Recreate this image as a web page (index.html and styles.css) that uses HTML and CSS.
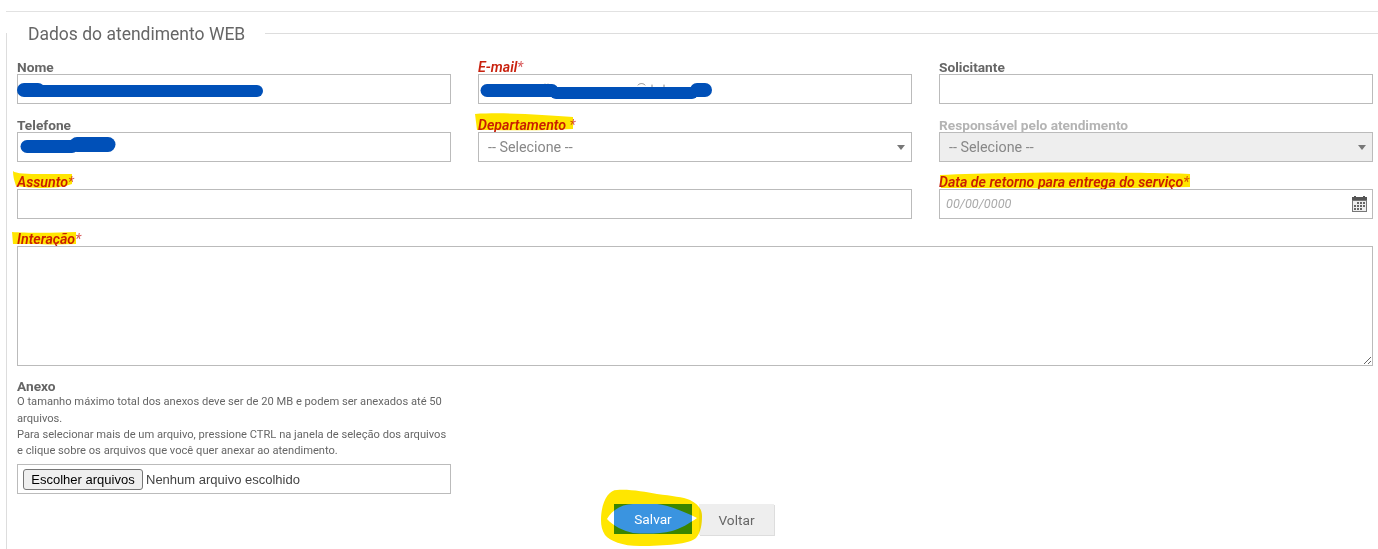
FILE: index.html
```html
<!DOCTYPE html>
<html lang="pt-BR">
<head>
<meta charset="utf-8">
<title>Dados do atendimento WEB</title>
<link rel="stylesheet" href="styles.css">
</head>
<body>
<div class="page">
  <hr class="rule">
  <form class="panel">
    <div class="legend">
      <h2 class="legend-title">Dados do atendimento WEB</h2>
      <span class="legend-line"></span>
    </div>
    <div class="grid">
      <div class="field">
        <label class="label">Nome</label>
        <input class="control" type="text">
      </div>
      <div class="field">
        <label class="label required">E-mail<span class="star">*</span></label>
        <input class="control" type="text">
      </div>
      <div class="field">
        <label class="label">Solicitante</label>
        <input class="control" type="text">
      </div>
      <div class="field">
        <label class="label">Telefone</label>
        <input class="control" type="text">
      </div>
      <div class="field">
        <label class="label required">Departamento <span class="star">*</span></label>
        <div class="select-wrap">
          <select class="control select"><option>-- Selecione --</option></select>
          <svg class="select-arrow" width="8" height="5" viewBox="0 0 8 5"><path d="M0 0h8L4 5z"/></svg>
        </div>
      </div>
      <div class="field">
        <label class="label disabled">Responsável pelo atendimento</label>
        <div class="select-wrap">
          <select class="control select is-disabled" disabled><option>-- Selecione --</option></select>
          <svg class="select-arrow" width="8" height="5" viewBox="0 0 8 5"><path d="M0 0h8L4 5z"/></svg>
        </div>
      </div>
      <div class="field span-2">
        <label class="label required">Assunto<span class="star">*</span></label>
        <input class="control" type="text">
      </div>
      <div class="field">
        <label class="label required">Data de retorno para entrega do serviço<span class="star">*</span></label>
        <div class="select-wrap">
          <input class="control date" type="text" placeholder="00/00/0000">
          <svg class="calendar" width="15" height="16" viewBox="0 0 15 16">
            <path fill="#555" d="M0 1h2V0h2v1h7V0h2v1h2v4H0z"/>
            <rect x="0" y="4" width="15" height="12" fill="#777"/>
            <rect x="1" y="5" width="13" height="10" fill="#eee"/>
            <path fill="#666" d="M5 6h2v2H5zM8 6h2v2H8zM11 6h2v2h-2zM2 9h2v2H2zM5 9h2v2H5zM8 9h2v2H8zM11 9h2v2h-2zM2 12h2v2H2zM5 12h2v2H5zM8 12h2v2H8z"/>
          </svg>
        </div>
      </div>
      <div class="field span-3">
        <label class="label required">Interação<span class="star">*</span></label>
        <textarea class="control textarea"></textarea>
      </div>
    </div>
    <div class="attach">
      <label class="label">Anexo</label>
      <p class="help">O tamanho máximo total dos anexos deve ser de 20 MB e podem ser anexados até 50 arquivos.</p>
      <p class="help">Para selecionar mais de um arquivo, pressione CTRL na janela de seleção dos arquivos e clique sobre os arquivos que você quer anexar ao atendimento.</p>
      <div class="file">
        <button class="file-btn" type="button">Escolher arquivos</button>
        <span class="file-name">Nenhum arquivo escolhido</span>
      </div>
    </div>
    <div class="actions">
      <button class="btn btn-primary" type="button">Salvar</button>
      <button class="btn btn-secondary" type="button">Voltar</button>
    </div>
  </form>

  <svg class="marks" width="1378" height="549" viewBox="0 0 1378 549">
    <g class="marker">
      <path d="M475 114C505 112 545 115 573 117L573 129C540 131 505 130 477 130Z"/>
      <path d="M940 175C1000 172 1130 172 1190 174L1190 187C1120 189 1000 188 941 188Z"/>
      <path d="M13 171C17 175 40 174 72 174L72 184C55 190 30 188 16 186C14 180 13 176 13 171Z"/>
      <path d="M12 232C25 233 55 233 76 232L76 244C55 245 30 244 13 244Z"/>
      <path fill-rule="evenodd" d="M601 520C601 503 608 490 617 490C630 489 645 492 657 494C672 496 683 497 690 500C698 504 702 509 702 516C702 524 701 532 696 538C690 544 665 546 640 546C622 546 610 541 605 535C602 530 601 526 601 520ZM607 519C612 510 622 504 633 504L657 504C668 505 685 512 697 518C690 523 680 529 672 531C660 534 645 534 633 533C624 531 613 526 607 519Z"/>
    </g>
    <g class="scribble">
      <path class="ink-thin" d="M545 84v3M548 84v3M638 85c2-2 5-2 7 0M652 85v3M664 85v3"/>
      <path class="ink-wide" d="M24 90H38"/>
      <path class="ink" d="M38 91H257"/>
      <path class="ink-mid" d="M27 146.500H72"/>
      <path class="ink-fat" d="M77 144.500H108"/>
      <path class="ink-mid" d="M487 90.500H552"/>
      <path class="ink" d="M556 93H692"/>
      <path class="ink-wide" d="M697 90H705"/>
    </g>
  </svg>
</div>
</body>
</html>
```

FILE: styles.css
```css
* { box-sizing: border-box; }
html, body { margin: 0; padding: 0; background: #fff; }
body { font-family: Roboto, "Noto Sans", Arial, sans-serif; color: #666; }
.page { position: relative; width: 1378px; height: 549px; overflow: hidden; padding-top: 11px; }
.rule { margin: 0 0 0 6px; height: 1px; border: 0; background: #e2e2e2; }
.panel { margin: 21px 0 0 6px; border-left: 1px solid #ddd; height: 517px; padding: 0 5px 0 10px; }
.legend { display: flex; align-items: center; height: 1px; gap: 20px; padding-left: 11px; margin-right: -5px; }
.legend-title { margin: 0; font-size: 17.5px; font-weight: 400; color: #666; line-height: 20px; white-space: nowrap; }
.legend-line { flex: 1; height: 1px; background: #ddd; }
.grid { display: grid; grid-template-columns: repeat(3, 434px); column-gap: 27px; row-gap: 13.33px; margin-top: 26.33px; }
.field { display: flex; flex-direction: column; min-width: 0; }
.span-2 { grid-column: span 2; }
.span-3 { grid-column: span 3; }
.label { display: block; height: 14px; line-height: 14px; font-size: 13.7px; font-weight: 700; color: #666; white-space: nowrap; }
.required { color: #c9210e; font-style: italic; font-size: 14.2px; font-weight: 600; }
.star { color: #d8595a; font-weight: 400; }
.disabled { color: #b4b4b4; }
.control { display: block; width: 100%; height: 30px; border: 1px solid #bbb; border-radius: 0; background: #fff; margin: 0; padding: 0 6px; font: 400 14.3px Roboto, "Noto Sans", Arial, sans-serif; color: #888; outline: 0; }
.select { appearance: none; -webkit-appearance: none; padding-left: 9px; }
.is-disabled { background: #eee; opacity: 1; color: #888; }
.date { font-size: 12.7px; }
.date::placeholder { color: #aaa; font-style: italic; opacity: 1; }
.select-wrap { position: relative; }
.select-arrow { position: absolute; right: 7px; top: 13px; fill: #777; }
.calendar { position: absolute; right: 6px; top: 7px; }
.textarea { height: 120px; resize: vertical; padding: 6px; }
.attach { width: 434px; margin-top: 13px; }
.help { margin: 0; font-size: 11.15px; line-height: 16.2px; color: #666; }
.label + .help { margin-top: 1px; }
.file { display: flex; align-items: center; height: 30px; margin-top: 5px; padding-left: 5px; border: 1px solid #bbb; font: 13px "Liberation Sans", Arial, sans-serif; color: #444; }
.file-btn { height: 21px; width: 120px; padding: 0; margin-right: 3px; font: 13px "Liberation Sans", Arial, sans-serif; color: #000; background: #efefef; border: 1px solid #767676; border-radius: 3px; }
.actions { display: flex; justify-content: flex-start; gap: 7px; margin-top: 10px; padding-left: 597px; }
.btn { height: 30px; border: 0; border-radius: 0; padding: 0; font: 400 13.7px Roboto, "Noto Sans", Arial, sans-serif; }
.btn-primary { width: 78px; background: #3a94e0; color: #fff; }
.btn-secondary { width: 75px; height: 31px; background: #eee; color: #666; box-shadow: 1px 1px 0 #ddd; }
.marks { position: absolute; left: 0; top: 0; pointer-events: none; }
.marker { fill: #ffe600; mix-blend-mode: multiply; }
.scribble { fill: none; stroke: #0050b8; stroke-linecap: round; }
.ink { stroke-width: 12px; }
.ink-mid { stroke-width: 13px; }
.ink-wide { stroke-width: 14px; }
.ink-fat { stroke-width: 15px; }
.ink-thin { stroke: #888; stroke-width: 1px; }
```
